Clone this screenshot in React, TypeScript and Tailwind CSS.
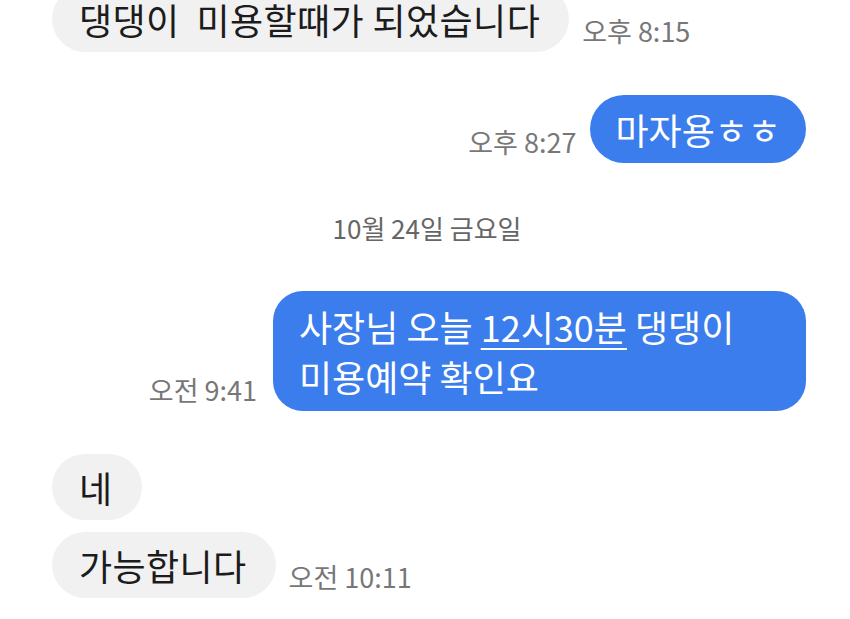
import React from 'react';

const FONT = "font-['Noto_Sans_CJK_KR','Noto_Sans',sans-serif]";

const Time: React.FC<{ children: React.ReactNode }> = ({ children }) => (
  <span className="text-[27px] leading-none text-[#777777] mb-[8px] whitespace-nowrap">{children}</span>
);

const Received: React.FC<{ text: React.ReactNode; time?: string; className?: string }> = ({ text, time, className }) => (
  <div className={`flex items-end gap-[13px] ${className ?? ''}`}>
    <div className="bg-[#f1f1f1] text-[#1c1c1c] text-[36px] leading-[44px] pl-[27px] pr-[29px] py-[11px] rounded-full whitespace-pre tracking-[0.4px]">
      {text}
    </div>
    {time && <Time>{time}</Time>}
  </div>
);

export default function App() {
  return (
    <div className={`w-[850px] h-[619px] overflow-hidden bg-white ${FONT}`}>
      <div className="flex flex-col pl-[52px] pr-[44px]">
        <Received className="-mt-[14px]" text="댕댕이  미용할때가 되었습니다" time="오후 8:15" />

        <div className="flex items-end justify-end gap-[14px] mt-[43px]">
          <Time>오후 8:27</Time>
          <div className="bg-[#3b7dec] text-white text-[36px] leading-[44px] px-[25px] py-[12px] rounded-full">
            마자용ㅎㅎ
          </div>
        </div>

        <div className="flex justify-center mt-[50px] mb-[48px]">
          <span className="text-[26px] leading-[30px] text-[#666666] -ml-[4px]">10월 24일 금요일</span>
        </div>

        <div className="flex items-end justify-end gap-[16px]">
          <Time>오전 9:41</Time>
          <div className="w-[533px] bg-[#3b7dec] text-white text-[36px] leading-[50px] pl-[26px] py-[10px] rounded-[30px]">
            사장님 오늘 <span className="underline underline-offset-[6px] decoration-[2px]">12시30분</span> 댕댕이
            <br />
            미용예약 확인요
          </div>
        </div>

        <Received className="mt-[43px]" text="네" />
        <Received className="mt-[12px]" text="가능합니다" time="오전 10:11" />
      </div>
    </div>
  );
}
